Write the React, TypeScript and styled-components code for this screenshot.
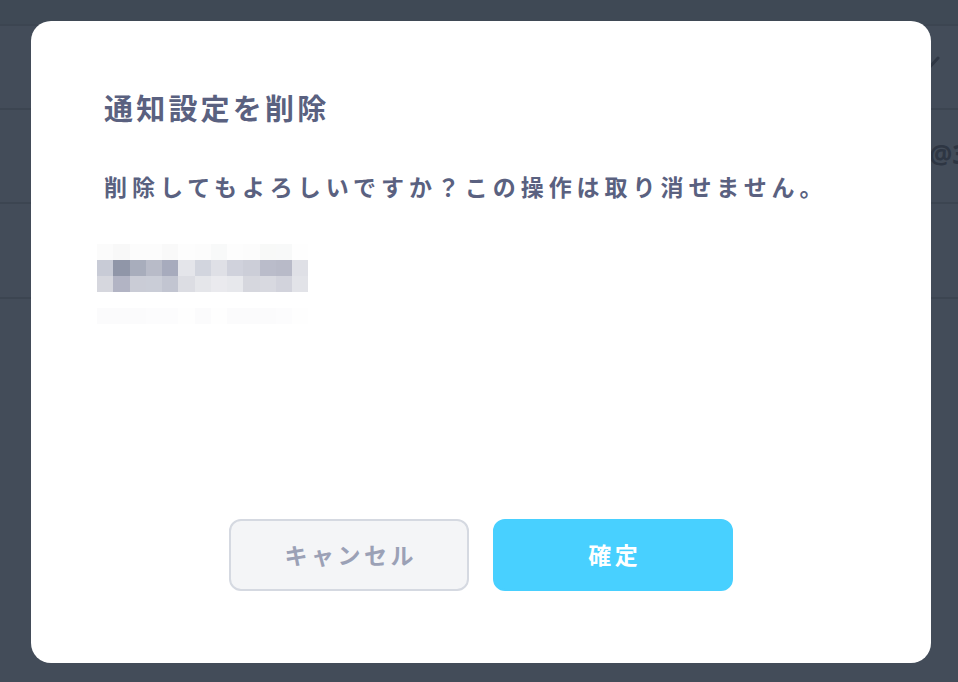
import { FunctionComponent } from "react";
import styled, { createGlobalStyle } from "styled-components";

const GlobalStyle = createGlobalStyle`
  html, body {
    margin: 0;
    padding: 0;
    width: 100%;
    height: 100%;
    overflow: hidden;
  }
  body {
    font-family: "Noto Sans CJK JP", "Noto Sans", sans-serif;
    background-color: #434c59;
  }
`;

const PageRoot = styled.div`
  position: relative;
  width: 958px;
  height: 682px;
  background-color: #434c59;
  overflow: hidden;
`;
const TopBar = styled.div`
  height: 24px;
  background-color: #3f4955;
  border-bottom: 2px solid #3c4551;
`;
const ListRow = styled.div<{ $h: number }>`
  height: ${(p) => p.$h}px;
  border-bottom: 2px solid #3c4551;
  display: flex;
  align-items: center;
  padding-left: 916px;
  box-sizing: border-box;
`;
const Chevron = styled.svg`
  width: 24px;
  height: 16px;
  margin-top: -6px;
`;
const RowText = styled.span`
  font-family: "Open Sans", "Noto Sans", sans-serif;
  font-size: 26px;
  font-weight: 700;
  color: #2e3643;
  white-space: nowrap;
  margin-left: 13px;
  margin-top: -4px;
`;

const Overlay = styled.div`
  position: absolute;
  inset: 0;
  display: flex;
  align-items: flex-start;
  justify-content: flex-start;
  padding: 21px 0 0 31px;
`;
const Modal = styled.div`
  width: 900px;
  height: 642px;
  background-color: #ffffff;
  border-radius: 20px;
  box-sizing: border-box;
  padding: 71px 73px 72px;
  display: flex;
  flex-direction: column;
  align-items: flex-start;
`;
const Title = styled.h2`
  margin: 0;
  font-size: 29px;
  line-height: 30px;
  font-weight: 700;
  letter-spacing: 3.2px;
  color: #5a6180;
`;
const Message = styled.p`
  margin: 52px 0 0;
  font-size: 23px;
  line-height: 24px;
  font-weight: 700;
  letter-spacing: 4.95px;
  color: #5a6180;
`;
const Mosaic = styled.div`
  margin: 46px 0 0 -7px;
  display: grid;
  grid-template-columns: repeat(13, 16.25px);
  grid-auto-rows: 16px;
`;
const Tile = styled.div<{ $c: string }>`
  background-color: ${(p) => p.$c};
`;
const Buttons = styled.div`
  margin-top: auto;
  align-self: center;
  display: flex;
  gap: 24px;
`;
const Button = styled.button<{ $primary?: boolean }>`
  width: 240px;
  height: 72px;
  box-sizing: border-box;
  border-radius: 12px;
  border: 2px solid ${(p) => (p.$primary ? "#48d0ff" : "#d5d9e1")};
  background-color: ${(p) => (p.$primary ? "#48d0ff" : "#f4f5f7")};
  color: ${(p) => (p.$primary ? "#ffffff" : "#9ba1b6")};
  font-family: "Noto Sans CJK JP", "Noto Sans", sans-serif;
  font-size: 23px;
  font-weight: 700;
  letter-spacing: 3.5px;
  padding: 0 0 3px 3.5px;
  cursor: pointer;
`;

const mosaic = [
  "#fbfbfb", "#f8f8f8", "#fcfcfc", "#fcfcfc", "#f9f9f9", "#fdfdfd", "#fcfcfc", "#f8f9f9", "#fdfdfd", "#fcfcfc", "#f8f9f8", "#f8f9f9", "#fefefe",
  "#c8cbd6", "#9096a8", "#a8adbc", "#b8bbc8", "#a7abbd", "#e4e5ea", "#d2d5de", "#dfe0e6", "#d0d2dc", "#ccced8", "#babcca", "#b8bac8", "#dfe0e6",
  "#d6d7de", "#b2b4c4", "#caccd6", "#cacdd7", "#c2c5d1", "#dcdde3", "#e5e6ea", "#eaeaee", "#e7e8ec", "#d6d7de", "#d8d9e0", "#d2d3dc", "#e2e3e8",
  "#ffffff", "#ffffff", "#ffffff", "#ffffff", "#ffffff", "#ffffff", "#ffffff", "#ffffff", "#ffffff", "#ffffff", "#ffffff", "#ffffff", "#ffffff",
  "#fbfbfc", "#fbfbfc", "#fbfbfc", "#fcfcfd", "#fcfcfd", "#fefefe", "#fbfbfc", "#fefefe", "#fbfbfc", "#fbfbfc", "#fbfbfc", "#fcfcfd", "#fefefe",
];

const App: FunctionComponent = () => {
  return (
    <PageRoot>
      <GlobalStyle />
      <TopBar />
      <ListRow $h={84}>
        <Chevron viewBox="0 0 24 16" fill="none">
          <path d="M2 2 L12 13 L22 2" stroke="#2f3744" strokeWidth="3" strokeLinecap="round" strokeLinejoin="round" />
        </Chevron>
      </ListRow>
      <ListRow $h={94}>
        <RowText>@3</RowText>
      </ListRow>
      <ListRow $h={95} />
      <Overlay>
        <Modal role="dialog">
          <Title>通知設定を削除</Title>
          <Message>削除してもよろしいですか？この操作は取り消せません。</Message>
          <Mosaic>
            {mosaic.map((c, i) => (
              <Tile key={i} $c={c} />
            ))}
          </Mosaic>
          <Buttons>
            <Button>キャンセル</Button>
            <Button $primary>確定</Button>
          </Buttons>
        </Modal>
      </Overlay>
    </PageRoot>
  );
};

export default App;
